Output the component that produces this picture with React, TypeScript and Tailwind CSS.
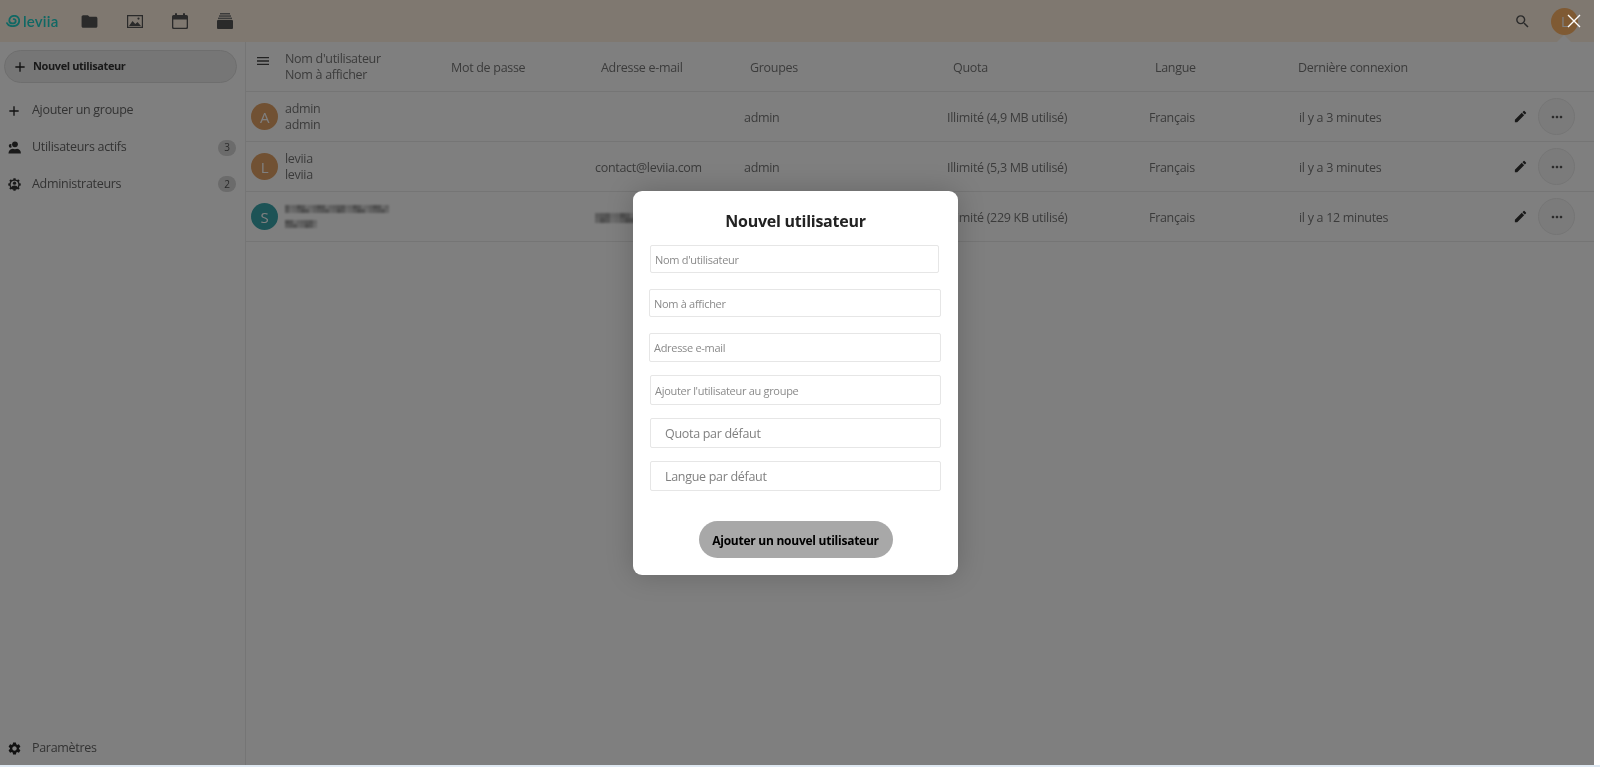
import React from "react";
import { MdFolder, MdSearch, MdEdit, MdMoreHoriz, MdMenu, MdSettings, MdAdd } from "react-icons/md";

const font = { fontFamily: '"Open Sans", "Noto Sans", sans-serif' };

function Logo() {
  return (
    <div className="flex items-center gap-[3px] text-[#20d0c8]">
      <svg width="14" height="12" viewBox="0 0 14 12" fill="none" stroke="currentColor" strokeWidth="1.8" strokeLinecap="round">
        <path d="M1 8.2C1.8 10.2 3.6 11.2 6.5 11.2C10.5 11.2 13.2 9 13.2 5.8C13.2 2.8 11 0.8 8.3 0.8C5.4 0.8 3.3 2.9 3.3 5.4C3.3 7.2 4.6 8.4 6.6 8.4C8.4 8.4 9.7 7.4 9.7 5.9C9.7 4.8 8.9 4 7.7 4.2" />
      </svg>
      <span className="text-[15px] font-semibold leading-none tracking-[0.2px]" style={{ fontFamily: "Lato, sans-serif" }}>leviia</span>
    </div>
  );
}

function ImageIcon() {
  return (
    <svg width="16" height="13" viewBox="0 0 16 13" fill="#555">
      <path fillRule="evenodd" d="M0 0h16v13H0zM1.2 1.2v10.6h13.6V1.2z" />
      <path d="M2 11 5.5 6l2.8 3 2.2-2 3.5 4z" />
      <circle cx="11.5" cy="3.6" r="1.1" />
    </svg>
  );
}

function CalendarIcon() {
  return (
    <svg width="16" height="16" viewBox="0 0 16 16" fill="#555">
      <path fillRule="evenodd" d="M1.5 2H14.5A1.5 1.5 0 0 1 16 3.5V14.5A1.5 1.5 0 0 1 14.5 16H1.5A1.5 1.5 0 0 1 0 14.5V3.5A1.5 1.5 0 0 1 1.5 2ZM1.3 6.5V14a.7.7 0 0 0 .7.7H14a.7.7 0 0 0 .7-.7V6.5Z" />
      <rect x="3" y="0" width="2" height="4" rx="1" />
      <rect x="11" y="0" width="2" height="4" rx="1" />
    </svg>
  );
}

function ArchiveIcon() {
  return (
    <svg width="16" height="16" viewBox="0 0 16 16" fill="#555">
      <rect x="3" y="0" width="10" height="1.5" fill="#777" />
      <rect x="2" y="2.3" width="12" height="1.5" fill="#777" />
      <rect x="1" y="4.6" width="14" height="1.6" fill="#777" />
      <path d="M1 7h14a1 1 0 0 1 1 1v7a1 1 0 0 1-1 1H1a1 1 0 0 1-1-1V8a1 1 0 0 1 1-1z" />
    </svg>
  );
}

function UsersIcon() {
  return (
    <svg width="13" height="13" viewBox="0 0 14 14" fill="#333">
      <circle cx="7.5" cy="3.6" r="3.1" />
      <path d="M0.5 13.5c0-2.8 1.8-4.8 4.5-5.2 1.6.6 3.4.6 5 0 2.3.4 3.8 2.2 3.8 4.3v.9z" />
      <path d="M2.8 7.2a2 2 0 0 1 0-4l.9.1a5 5 0 0 0 .3 3.4z" />
    </svg>
  );
}

function AdminIcon() {
  return (
    <svg width="13" height="13" viewBox="0 0 24 24">
      <g stroke="#333" strokeWidth="4.2">
        <line x1="12" y1="0.5" x2="12" y2="23.5" />
        <line x1="0.5" y1="12" x2="23.5" y2="12" />
        <line x1="3.8" y1="3.8" x2="20.2" y2="20.2" />
        <line x1="3.8" y1="20.2" x2="20.2" y2="3.8" />
      </g>
      <circle cx="12" cy="12" r="9.5" fill="#333" />
      <circle cx="12" cy="12" r="7" fill="#fff" />
      <circle cx="12" cy="9.5" r="3" fill="#333" />
      <path d="M6 18c.6-2.8 3-4 6-4s5.400 1.200 6 4c-1.500 1.400-3.700 2-6 2s-4.500-.6-6-2z" fill="#333" />
    </svg>
  );
}

const tones = ["bg-[#c4c4c4]", "bg-[#a6a6a6]", "bg-[#bababa]", "bg-[#dadada]", "bg-[#9c9c9c]", "bg-[#cfcfcf]", "bg-[#b0b0b0]"];

function Mosaic({ cols, rows: n, size, seed }: { cols: number; rows: number; size: number; seed: number }) {
  const cells = [];
  for (let y = 0; y < n; y++) {
    for (let x = 0; x < cols; x++) {
      cells.push(<div key={`${x}-${y}`} className={tones[(x * 3 + y * 5 + seed + (x * x) % 4) % tones.length]} style={{ width: size, height: size }} />);
    }
  }
  return (
    <div className="flex flex-wrap blur-[0.8px]" style={{ width: cols * size }}>
      {cells}
    </div>
  );
}

const rows = [
  { letter: "A", color: "bg-[#e2a266]", name: "admin", display: "admin", email: "", quota: "Illimité (4,9 MB utilisé)", last: "il y a 3 minutes" },
  { letter: "L", color: "bg-[#e2a266]", name: "leviia", display: "leviia", email: "contact@leviia.com", quota: "Illimité (5,3 MB utilisé)", last: "il y a 3 minutes" },
  { letter: "S", color: "bg-[#3ba6ad]", name: "", display: "", email: "", quota: "Illimité (229 KB utilisé)", last: "il y a 12 minutes" },
];

function UserRow({ r, i }: { r: (typeof rows)[number]; i: number }) {
  return (
    <div className="flex h-[50px] items-center border-b border-[#eaeaea] pt-[2px] text-[12.5px] leading-[16px] tracking-[-0.3px] text-[#777]">
      <div className="mb-[2px] flex w-[39px] shrink-0 justify-start pl-[5px]">
        <div className={`flex h-[27px] w-[27px] items-center justify-center rounded-full text-[15px] text-white ${r.color}`}>{r.letter}</div>
      </div>
      <div className="mb-[2px] w-[310px] shrink-0">
        {i === 2 ? (
          <div className="flex flex-col gap-[7px]">
            <Mosaic cols={26} rows={2} size={4} seed={1} />
            <Mosaic cols={8} rows={2} size={4} seed={4} />
          </div>
        ) : (
          <>
            <div>{r.name}</div>
            <div>{r.display}</div>
          </>
        )}
      </div>
      <div className="w-[149px] shrink-0">
        {i === 2 ? <Mosaic cols={8} rows={2} size={5} seed={2} /> : r.email}
      </div>
      <div className="w-[203px] shrink-0">{i === 2 ? "" : "admin"}</div>
      <div className="w-[202px] shrink-0">{r.quota}</div>
      <div className="w-[150px] shrink-0">Français</div>
      <div className="flex-1">{r.last}</div>
      <MdEdit className="mb-[2px] mr-[10px] text-[15px] text-[#333]" />
      <div className="mb-[2px] mr-[19px] flex h-[37px] w-[37px] items-center justify-center rounded-full border border-[#eaeaea] bg-[#f7f7f7]">
        <MdMoreHoriz className="text-[16px] text-[#555]" />
      </div>
    </div>
  );
}

function Field({ label, cls, small = true }: { label: string; cls: string; small?: boolean }) {
  return (
    <div className={`flex items-center rounded-[2px] border border-[#e6e6e6] bg-white pt-[2px] tracking-[-0.3px] ${small ? "pl-[4px] text-[11px] text-[#8a8a8a]" : "pl-[14px] text-[12.5px] text-[#808080]"} ${cls}`}>
      {label}
    </div>
  );
}

export default function App() {
  return (
    <div className="relative h-[767px] w-[1600px] overflow-hidden bg-white blur-[0.35px]" style={font}>
      <div className="flex h-[765px] w-[1594px] flex-col">
        <header className="relative flex h-[42px] shrink-0 items-center bg-[#fef0e0]">
          <div className="ml-[6px] w-[68px]"><Logo /></div>
          <div className="flex items-center">
            <div className="ml-[6px] flex w-[47px] justify-start"><MdFolder className="text-[19px] text-[#555]" /></div>
            <div className="flex w-[45px] justify-start"><ImageIcon /></div>
            <div className="flex w-[45px] justify-start"><CalendarIcon /></div>
            <div className="flex w-[45px] justify-start"><ArchiveIcon /></div>
          </div>
          <div className="flex-1" />
          <MdSearch className="mr-[20px] text-[17px] text-[#555]" />
          <div className="mr-[16px] flex h-[27px] w-[27px] items-center justify-start rounded-full bg-[#ffb466] pl-[10px] text-[14px] text-white">L</div>
          <div className="absolute bottom-0 left-[1557px] h-0 w-0 border-x-[7px] border-b-[7px] border-x-transparent border-b-white" />
        </header>
        <div className="flex min-h-0 flex-1">
          <aside className="flex w-[246px] shrink-0 flex-col border-r border-[#eaeaea] bg-white text-[12.5px] tracking-[-0.3px] text-[#666]">
            <div className="ml-[4px] mr-[8px] mt-[8px] flex h-[33px] items-center rounded-full border border-[#dcdcdc] bg-[#ededed] pl-[7px] text-[11px] font-bold tracking-[-0.4px] text-[#333]">
              <MdAdd className="mr-[5px] text-[16px] text-[#222]" />
              Nouvel utilisateur
            </div>
            <div className="mt-[9px] flex h-[37px] items-center pl-[6px]">
              <MdAdd className="mr-[10px] text-[16px] text-[#222]" />
              Ajouter un groupe
            </div>
            <div className="flex h-[37px] items-center pl-[8px] pr-[9px]">
              <UsersIcon />
              <span className="ml-[11px] flex-1">Utilisateurs actifs</span>
              <span className="flex h-[16px] w-[18px] items-center justify-center rounded-full bg-[#d6d6d6] text-[10px] text-[#555]">3</span>
            </div>
            <div className="flex h-[36px] items-center pl-[8px] pr-[9px]">
              <AdminIcon />
              <span className="ml-[11px] flex-1">Administrateurs</span>
              <span className="flex h-[16px] w-[18px] items-center justify-center rounded-full bg-[#d6d6d6] text-[10px] text-[#555]">2</span>
            </div>
            <div className="flex-1" />
            <div className="mb-[5px] flex h-[24px] items-center pl-[7px]">
              <MdSettings className="mr-[10px] text-[15px] text-[#222]" />
              Paramètres
            </div>
          </aside>
          <main className="min-w-0 flex-1">
            <div className="flex h-[50px] items-center border-b border-[#eaeaea] pt-[2px] text-[12.5px] leading-[16px] tracking-[-0.3px] text-[#777]">
              <div className="mb-[14px] flex w-[39px] shrink-0 pl-[9px]"><MdMenu className="text-[16px] text-[#444]" /></div>
              <div className="mb-[2px] w-[166px] shrink-0"><div>Nom d'utilisateur</div><div>Nom à afficher</div></div>
              <div className="w-[150px] shrink-0">Mot de passe</div>
              <div className="w-[149px] shrink-0">Adresse e-mail</div>
              <div className="w-[203px] shrink-0">Groupes</div>
              <div className="w-[202px] shrink-0">Quota</div>
              <div className="w-[144px] shrink-0">Langue</div>
              <div className="-ml-[1px]">Dernière connexion</div>
            </div>
            {rows.map((r, i) => <UserRow key={i} r={r} i={i} />)}
          </main>
        </div>
      </div>
      <div className="h-[2px] w-full bg-[#dfe9f2]" />

      <div className="absolute left-0 top-0 h-[765px] w-[1594px] bg-black/50" />
      <svg className="absolute left-[1567px] top-[14px]" width="14" height="14" viewBox="0 0 14 14" stroke="#fff" strokeWidth="1.4" fill="none">
        <path d="M1 1 13 13M13 1 1 13" />
      </svg>

      <div className="absolute left-[633px] top-[191px] flex h-[384px] w-[325px] flex-col rounded-[9px] bg-white shadow-[0_0_28px_rgba(0,0,0,0.2)]">
        <h2 className="mt-[19px] text-center text-[16px] font-bold leading-[22px] tracking-[-0.25px] text-[#222]">Nouvel utilisateur</h2>
        <Field label="Nom d'utilisateur" cls="ml-[17px] mt-[13px] h-[28px] w-[289px]" />
        <Field label="Nom à afficher" cls="ml-[16px] mt-[16px] h-[28px] w-[292px]" />
        <Field label="Adresse e-mail" cls="ml-[16px] mt-[16px] h-[29px] w-[292px]" />
        <Field label="Ajouter l'utilisateur au groupe" cls="ml-[17px] mt-[13px] h-[30px] w-[291px]" />
        <Field label="Quota par défaut" cls="ml-[17px] mt-[13px] h-[30px] w-[291px]" small={false} />
        <Field label="Langue par défaut" cls="ml-[17px] mt-[13px] h-[30px] w-[291px]" small={false} />
        <div className="mt-[30px] flex justify-center">
          <div className="flex h-[37px] w-[194px] items-center justify-center rounded-full bg-[#a8a8a8] pt-[2px] text-[12px] font-bold tracking-[-0.25px] text-black">Ajouter un nouvel utilisateur</div>
        </div>
      </div>
    </div>
  );
}
